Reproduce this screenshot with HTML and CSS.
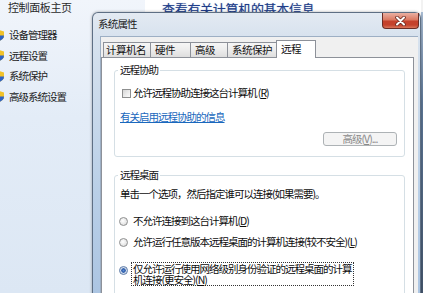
FILE: index.html
```html
<!DOCTYPE html>
<html lang="zh-CN">
<head>
<meta charset="utf-8">
<title>系统属性</title>
<link rel="stylesheet" href="styles.css">
</head>
<body>
<div class="screen">
  <aside class="sidebar">
    <div class="home">控制面板主页</div>
    <ul class="tasks">
      <li class="task"><svg class="shield" width="10" height="11" viewBox="0 0 10 11"><path d="M5 0L10 1.5V5.5C10 8.5 7.5 10.3 5 11C2.5 10.3 0 8.5 0 5.5V1.5Z" fill="#f1c22a"/><path d="M5 0V5.5H0V1.5Z" fill="#2d63c6"/><path d="M5 5.5H10C10 8.5 7.5 10.3 5 11Z" fill="#2d63c6"/></svg><span>设备管理器</span></li>
      <li class="task"><svg class="shield" width="10" height="11" viewBox="0 0 10 11"><path d="M5 0L10 1.5V5.5C10 8.5 7.5 10.3 5 11C2.5 10.3 0 8.5 0 5.5V1.5Z" fill="#f1c22a"/><path d="M5 0V5.5H0V1.5Z" fill="#2d63c6"/><path d="M5 5.5H10C10 8.5 7.5 10.3 5 11Z" fill="#2d63c6"/></svg><span>远程设置</span></li>
      <li class="task"><svg class="shield" width="10" height="11" viewBox="0 0 10 11"><path d="M5 0L10 1.5V5.5C10 8.5 7.5 10.3 5 11C2.5 10.3 0 8.5 0 5.5V1.5Z" fill="#f1c22a"/><path d="M5 0V5.5H0V1.5Z" fill="#2d63c6"/><path d="M5 5.5H10C10 8.5 7.5 10.3 5 11Z" fill="#2d63c6"/></svg><span>系统保护</span></li>
      <li class="task"><svg class="shield" width="10" height="11" viewBox="0 0 10 11"><path d="M5 0L10 1.5V5.5C10 8.5 7.5 10.3 5 11C2.5 10.3 0 8.5 0 5.5V1.5Z" fill="#f1c22a"/><path d="M5 0V5.5H0V1.5Z" fill="#2d63c6"/><path d="M5 5.5H10C10 8.5 7.5 10.3 5 11Z" fill="#2d63c6"/></svg><span>高级系统设置</span></li>
    </ul>
  </aside>
  <main class="main">
    <h1 class="heading">查看有关计算机的基本信息</h1>
  </main>
  <div class="edge"></div>

  <section class="dialog">
    <header class="titlebar">
      <span class="title">系统属性</span>
      <button class="close" aria-label="关闭"><svg width="11" height="10" viewBox="0 0 11 10"><path d="M2 1.5L9 8.5M9 1.5L2 8.5" stroke="#6a2a22" stroke-width="3.6" stroke-linecap="round"/><path d="M2 1.5L9 8.5M9 1.5L2 8.5" stroke="#fff" stroke-width="2" stroke-linecap="round"/></svg></button>
    </header>
    <div class="body">
      <div class="client">
        <div class="tabs">
          <div class="tab">计算机名</div>
          <div class="tab">硬件</div>
          <div class="tab">高级</div>
          <div class="tab">系统保护</div>
          <div class="tab active">远程</div>
        </div>
        <div class="panel">
          <fieldset class="group">
            <legend class="legend">远程协助</legend>
            <div class="row check-row"><span class="checkbox"></span><span>允许远程协助连接这台计算机 (<span class="u">R</span>)</span></div>
            <div class="row link-row"><a class="link" href="#">有关启用远程协助的信息</a></div>
            <div class="btn-row"><button class="btn" disabled>高级(<span class="u">V</span>)...</button></div>
          </fieldset>
          <fieldset class="group group-rd">
            <legend class="legend">远程桌面</legend>
            <div class="row desc">单击一个选项，然后指定谁可以连接(如果需要)。</div>
            <div class="row radio-row r1"><span class="radio"></span><span>不允许连接到这台计算机(<span class="u">D</span>)</span></div>
            <div class="row radio-row r2"><span class="radio"></span><span>允许运行任意版本远程桌面的计算机连接(较不安全)(<span class="u">L</span>)</span></div>
            <div class="row radio-row r3"><span class="radio checked"></span><span class="focus">仅允许运行使用网络级别身份验证的远程桌面的计算机连接(更安全)(<span class="u">N</span>)</span></div>
          </fieldset>
        </div>
      </div>
    </div>
  </section>
</div>
</body>
</html>
```

FILE: styles.css
```css
* { box-sizing: border-box; }
html, body { margin: 0; padding: 0; }
body {
  width: 423px;
  height: 293px;
  overflow: hidden;
  background: #fff;
  font-family: "Noto Sans CJK SC", "Noto Sans", sans-serif;
  font-size: 10.5px;
  letter-spacing: -1px;
  color: #0c0c0c;
}

.screen {
  position: relative;
  display: grid;
  grid-template-columns: 145px 1fr 2px;
  height: 293px;
}

/* left pane */
.sidebar {
  background: linear-gradient(to bottom, #f1f5fb 0%, #e3ecf7 40%, #dce7f4 100%);
  padding-left: 8px;
}
.home {
  font-size: 11px;
  line-height: 14px;
  letter-spacing: -0.4px;
  color: #2a2a2a;
}
.tasks {
  list-style: none;
  margin: 15px 0 0;
  padding: 0;
  display: flex;
  flex-direction: column;
  gap: 8.5px;
}
.task {
  display: flex;
  align-items: center;
  gap: 5px;
  margin-left: -14px;
  line-height: 12px;
  color: #222;
}
.shield { flex: none; }

/* main content behind */
.main { padding: 1px 0 0 17px; }
.heading {
  margin: 0;
  font-size: 13px;
  line-height: 16px;
  font-weight: normal;
  letter-spacing: -0.3px;
  color: #203d8a;
  text-shadow: 0 0 1px rgba(32, 61, 138, 0.5);
}
.edge {
  background: linear-gradient(to bottom, #f2f2f2 0, #f2f2f2 12px, #a9bdd4 12px, #5f7999 35%, #46586f 100%);
}

/* dialog window */
.dialog {
  position: absolute;
  left: 92px;
  top: 12px;
  width: 329px;
  height: 300px;
  display: flex;
  flex-direction: column;
  border: 1px solid #5e6f84;
  border-bottom: none;
  border-radius: 6px 6px 0 0;
  background: linear-gradient(to bottom, #e3eaf2 0, #d7e2ee 24px, #b9cfe7 60%, #a9c3e1 100%);
  box-shadow: 0 0 3px rgba(0, 0, 0, 0.35);
}
.titlebar {
  display: flex;
  align-items: flex-start;
  height: 23px;
  padding-left: 5px;
  flex: none;
}
.title {
  padding-top: 4px;
  line-height: 14px;
  letter-spacing: -0.8px;
  color: #1a1a1a;
}
.close {
  margin-left: auto;
  margin-right: 1px;
  width: 37px;
  height: 16px;
  padding: 0;
  display: flex;
  align-items: center;
  justify-content: center;
  border: 1px solid #6b2d25;
  border-top: none;
  border-radius: 0 0 4px 4px;
  background: linear-gradient(to bottom, #eab0a2 0%, #db7a63 45%, #c5412c 55%, #c4422c 80%, #d9765c 100%);
}

.body {
  flex: 1;
  display: flex;
  padding: 0 2px 0 7px;
}
.client {
  flex: 1;
  display: flex;
  flex-direction: column;
  background: #f0f0f0;
  border-top: 1px solid #9dafc4;
  border-left: 1px solid #9dafc4;
  padding: 3px 4px 0 0;
}

/* tabs */
.tabs {
  display: flex;
  align-items: flex-end;
  height: 17px;
  padding-left: 2px;
  position: relative;
  z-index: 1;
  flex: none;
}
.tab {
  height: 15px;
  line-height: 13px;
  padding-left: 4px;
  border: 1px solid #8d9199;
  border-bottom: none;
  margin-right: -1px;
  background: linear-gradient(to bottom, #f6f6f6 0%, #ececec 50%, #dedede 100%);
  letter-spacing: -0.5px;
  color: #111;
  white-space: nowrap;
}
.tab:nth-child(1) { width: 48px; padding-left: 2px; }
.tab:nth-child(2) { width: 41px; }
.tab:nth-child(3) { width: 38px; }
.tab:nth-child(4) { width: 51px; }
.tab.active {
  width: 40px;
  height: 18px;
  margin-left: -1px;
  margin-bottom: -1px;
  line-height: 16px;
  background: #fff;
  position: relative;
  z-index: 2;
}

.panel {
  flex: 1;
  background: #fff;
  border: 1px solid #8d9199;
  padding: 0 8px 0 12px;
}

/* group boxes */
.group {
  margin: 6px 0 0;
  padding: 0 5px 10px;
  border: 1px solid #d5dfe5;
  border-radius: 3px;
  min-width: 0;
}
.group-rd { margin-top: 12px; }
.legend {
  padding: 0 2px;
  margin-left: -2px;
  line-height: 12px;
  color: #151515;
}
.row {
  display: flex;
  align-items: center;
  line-height: 12px;
  white-space: nowrap;
}
.u { text-decoration: underline; }

.check-row { margin-top: 11px; }
.checkbox {
  width: 9px;
  height: 9px;
  margin: 0 2px 0 2px;
  border: 1px solid #8e8f8f;
  background: linear-gradient(135deg, #d6d6d6 0%, #eeeeee 60%, #fbfbfb 100%);
  flex: none;
}
.link-row { margin-top: 12px; }
.link {
  color: #1a68bd;
  text-decoration: underline;
}
.btn-row {
  display: flex;
  justify-content: flex-end;
  margin-top: 9px;
}
.btn {
  width: 74px;
  height: 14px;
  margin-right: 2px;
  padding: 0;
  border: 1px solid #adb2b5;
  border-radius: 3px;
  background: #f4f4f4;
  color: #8a8a8a;
  font-family: inherit;
  font-size: 10.5px;
  letter-spacing: -1px;
  line-height: 12px;
}

.desc { margin-top: 7px; }
.r1 { margin-top: 15px; }
.r2 { margin-top: 9px; }
.r3 { margin-top: 14px; align-items: flex-start; white-space: normal; }
.radio {
  width: 9px;
  height: 9px;
  flex: none;
  margin: 0 5px 0 -1px;
  border-radius: 50%;
  border: 1px solid #8e8f8f;
  background: radial-gradient(circle at 40% 40%, #ffffff 0%, #e6e6e6 60%, #d2d2d2 100%);
}
.r3 .radio { margin: 4px 3px 0 -1px; }
.radio.checked {
  border-color: #5d7ba8;
  background: radial-gradient(circle, #5c8fd8 0, #2755a3 1.9px, #c8d6ea 2.5px, #f4f6f9 100%);
}
.focus {
  display: inline-block;
  width: 223px;
  padding: 0 1px;
  border: 1px dotted #333;
  line-height: 11px;
}
```
